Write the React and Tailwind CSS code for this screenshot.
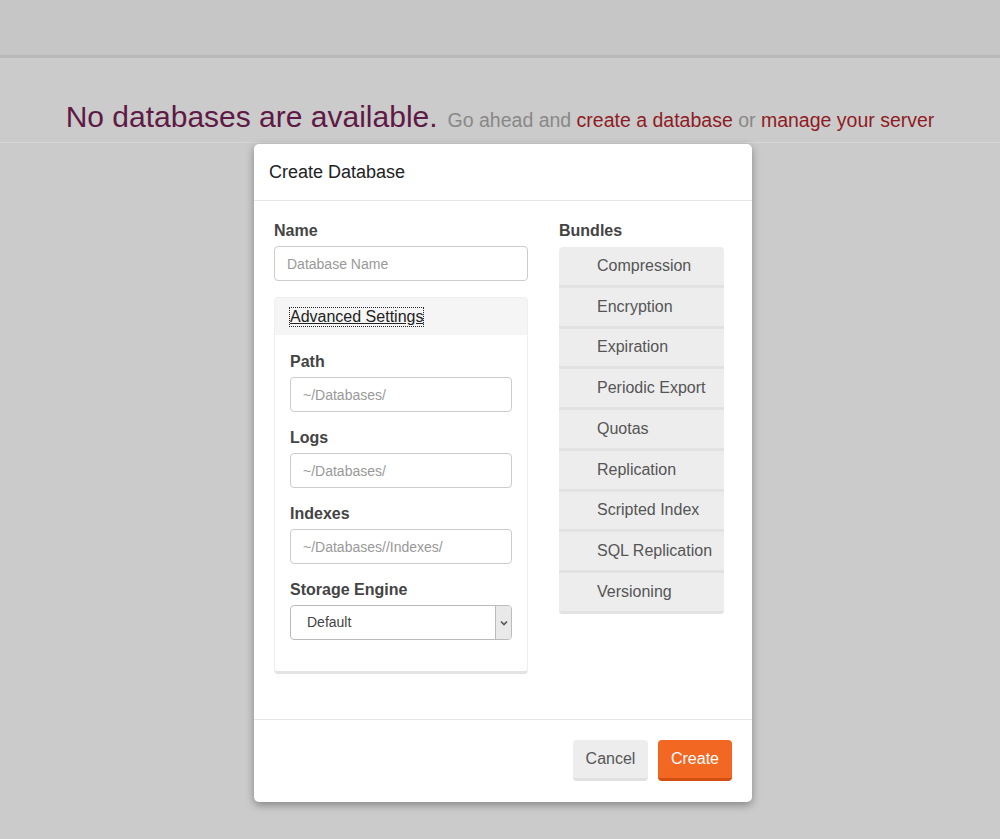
const bundles = [
  'Compression',
  'Encryption',
  'Expiration',
  'Periodic Export',
  'Quotas',
  'Replication',
  'Scripted Index',
  'SQL Replication',
  'Versioning',
]

function Field({ label, placeholder }) {
  return (
    <div className="mb-[16px]">
      <label className="mb-[5px] block text-[16px] leading-[20px] font-bold text-[#444]">{label}</label>
      <input
        placeholder={placeholder}
        className="block h-[35px] w-full rounded-[4px] border border-[#ccc] bg-white px-[12px] text-[14px] text-[#555] outline-none placeholder:text-[#999]"
      />
    </div>
  )
}

function CreateDatabaseModal() {
  return (
    <div className="absolute left-[254px] top-[144px] flex h-[658px] w-[498px] flex-col rounded-[5px] bg-white shadow-[0_3px_9px_rgba(0,0,0,0.35)]">
      <div className="flex h-[57px] items-center border-b border-[#e5e5e5] px-[15px]">
        <h4 className="text-[18px] text-[#222]">Create Database</h4>
      </div>

      <div className="flex flex-1 gap-[31px] px-[20px] pt-[20px]">
        <div className="w-[254px]">
          <label className="mb-[5px] block text-[16px] leading-[20px] font-bold text-[#444]">Name</label>
          <input
            placeholder="Database Name"
            className="block h-[35px] w-full rounded-[4px] border border-[#ccc] bg-white px-[12px] text-[14px] text-[#555] outline-none placeholder:text-[#999]"
          />

          <div className="mt-[16px] rounded-[4px] border border-[#eee] border-b-[3px] border-b-[#e3e3e3] bg-white">
            <div className="flex h-[37px] items-center bg-[#f5f5f5] px-[15px]">
              <span className="text-[16px] leading-[18px] text-[#222] underline outline-1 outline-dotted outline-offset-0 outline-[#222]">
                Advanced Settings
              </span>
            </div>
            <div className="px-[15px] pt-[17px] pb-[16px]">
              <Field label="Path" placeholder="~/Databases/" />
              <Field label="Logs" placeholder="~/Databases/" />
              <Field label="Indexes" placeholder="~/Databases//Indexes/" />
              <div className="mb-[15px]">
                <label className="mb-[5px] block text-[16px] leading-[20px] font-bold text-[#444]">Storage Engine</label>
                <div className="flex h-[35px] w-full items-stretch overflow-hidden rounded-[4px] border border-[#bbb] bg-white">
                  <span className="flex flex-1 items-center pl-[16px] text-[14px] text-[#444]">Default</span>
                  <span className="flex w-[16px] items-center justify-center border-l border-[#bbb] bg-[#e9e9e9]">
                    <svg width="8" height="6" viewBox="0 0 8 6">
                      <path d="M1 1.5 L4 4.5 L7 1.5" fill="none" stroke="#555" strokeWidth="1.6" />
                    </svg>
                  </span>
                </div>
              </div>
            </div>
          </div>
        </div>

        <div className="w-[165px]">
          <label className="mb-[6px] block text-[16px] leading-[20px] font-bold text-[#444]">Bundles</label>
          <div className="overflow-hidden rounded-[4px]">
            {bundles.map((b) => (
              <div
                key={b}
                className="flex h-[40.75px] items-center border-b-[3px] border-[#e2e2e2] bg-[#ededed] pl-[38px] text-[16px] text-[#555]"
              >
                {b}
              </div>
            ))}
          </div>
        </div>
      </div>

      <div className="flex h-[83px] items-start justify-end gap-[10px] border-t border-[#e5e5e5] px-[20px] pt-[20px]">
        <button className="h-[41px] w-[75px] rounded-[4px] border-b-[3px] border-[#e0e0e0] bg-[#ededed] text-[16px] text-[#555]">
          Cancel
        </button>
        <button className="h-[41px] w-[74px] rounded-[4px] border-b-[3px] border-[#d24e12] bg-[#f26722] text-[16px] text-white">
          Create
        </button>
      </div>
    </div>
  )
}

export default function App() {
  return (
    <div className="relative h-[839px] w-full overflow-hidden bg-[#cbcbcb] font-['Liberation_Sans',Arial,sans-serif]">
      <div className="h-[58px] border-b-[3px] border-[#b9b9b9] bg-[#c6c6c6]" />
      <div className="h-[85px] border-b border-[#d6d6d6] pt-[41px] text-center leading-[36px]">
        <span className="text-[30px] text-[#5e1a45]">No databases are available.</span>
        <span className="ml-[10px] text-[19.5px] text-[#888]">
          Go ahead and <span className="text-[#8e1b24]">create a database</span> or{' '}
          <span className="text-[#8e1b24]">manage your server</span>
        </span>
      </div>
      <CreateDatabaseModal />
    </div>
  )
}
